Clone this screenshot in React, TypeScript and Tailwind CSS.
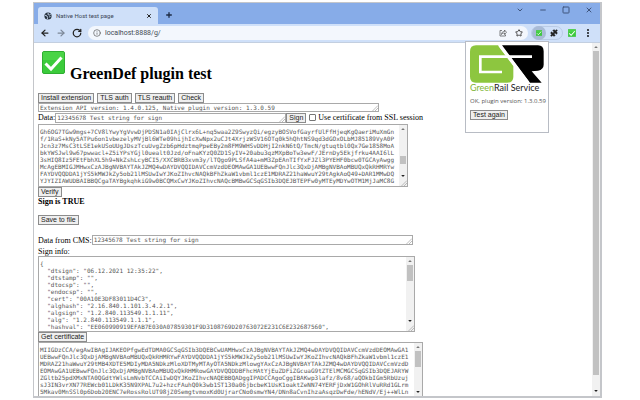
import type { ReactNode } from 'react';
import clsx from 'clsx';
import { ArrowLeft, ArrowRight, ChevronDown, Info, Minus, Plus, Puzzle, RotateCw, Square, Star, X } from 'lucide-react';

const SIGNATURE = [
  'Gh6OG7TGw9mgs+7CV8lYwyYgVvwDjPDSN1a0IAjClrx6L+nq5waa2Z9SwyzQi/egzyBOSVofGayrfUlFfHjeqKgQaeriMuXmGn',
  'f/1RaS+kNy5ATPu6on1vbezelyMVjBl6WTe09hijhIcXwNpx2uCJt4XrjzWSV16OTq0k5hQhtNS9qd3dGOxOLbMJ85189VyA0P',
  'Jcn3z7MsC3tLSE1ekUSoUUgJDszTcuUvgZzb6pHdztmqPpeEBy2m8FM9WHSvDDHjI2nkN6tQ/TmcN/gtuqtbl0Qx7Ge1858MoA',
  'bkYWSJwl9w67pwwacl+Z5iYPsYGjl0uealt0Jzd/oFnaKYzQ0ZD1SyIV+20abu3qzMXpBoTw3ewF/JErnDy5Ekjfrku4AAI6lL',
  '3sHIQ8Iz5FEtFbhXL5h9+NkZshLcyBCI5/XXCBRB3xvm3y/lTQgo9PLSfA4a+mM3ZpEAnTIfYxFJZl3PYEHF0bcw0TGCAyAwgg',
  'McAgEBMIGJMHwxCzAJBgNVBAYTAkJZMQ4wDAYDVQQIDAVCcmVzdDEOMAwGA1UEBwwFQnJlc3QxDjAMBgNVBAoMBUQxQkRHMRYw',
  'FAYDVQQDDA1jYS5kMWJkZy5ob21lMSUwIwYJKoZIhvcNAQkBFhZkaW1vbml1czE1MDRAZ21haWwuY29tAgkAoQ49+DAR1MMwDQ',
  'YJYIZIAWUDBAIBBQCgaTAYBgkqhkiG9w0BCQMxCwYJKoZIhvcNAQcBMBwGCSqGSIb3DQEJBTEPFw0yMTEyMDYwOTM1MjJaMC8G',
].join('\n');

const SIGN_INFO = `{
  "dtsign": "06.12.2021 12:35:22",
  "dtstamp": "",
  "dtocsp": "",
  "endocsp": "",
  "cert": "00A10E3DF83011D4C3",
  "alghash": "2.16.840.1.101.3.4.2.1",
  "algsign": "1.2.840.113549.1.1.11",
  "alg": "1.2.840.113549.1.1.1",
  "hashval": "EE060990919EFAB7E030A07859301F9D3108769D20763072E231C6E232687560",`;

const CERTIFICATE = [
  'MIIGDzCCA/egAwIBAgIJAKEOPfgwEdTDMA0GCSqGSIb3DQEBCwUAMHwxCzAJBgNVBAYTAkJZMQ4wDAYDVQQIDAVCcmVzdDEOMAwGA1',
  'UEBwwFQnJlc3QxDjAMBgNVBAoMBUQxQkRHMRYwFAYDVQQDDA1jYS5kMWJkZy5ob21lMSUwIwYJKoZIhvcNAQkBFhZkaW1vbml1czE1',
  'MDRAZ21haWwuY29tMB4XDTE5MDIyMDA5NDkzMloXDTMyMTAyOTA5NDkzMlowgYAxCzAJBgNVBAYTAkJZMQ4wDAYDVQQIDAVCcmVzdD',
  'EOMAwGA1UEBwwFQnJlc3QxDjAMBgNVBAoMBUQxQkRHMRowGAYDVQQDDBFhcHAtYjEuZDFiZGcuaG9tZTElMCMGCSqGSIb3DQEJARYW',
  'ZGltb25pdXMxNTA0QGdtYWlsLmNvbTCCAiIwDQYJKoZIhvcNAQEBBQADggIPADCCAgoCggIBAKwp3lafz/8v68/aQOkbIGm5RbUzuj',
  'sJ3IN3vrXN77REWcb01LDkK35N9XPAL7u2+hzcFAuhQ0k3wb1ST130a06jbcbeK1UsK1oaktZeNN74YERFjDxW1GOhRlVuRRd1GLrm',
  '5Mkav0MnSSl0p6Dob20ENC7eRossRolUT98jZ0SemgtvmoxKd0UjrarCNo0smwYN4/DNn8aCvnIhzaAsqzDwFde/hENdV/Ej++WlLn',
].join('\n');

function CheckMark({ className }: { className: string }) {
  return (
    <svg viewBox="0 0 23 23" className={className} aria-hidden="true">
      <rect x="0.5" y="0.5" width="22" height="22" rx="1.5" fill="#3bcb3b" stroke="#2fae31" />
      <path d="M1 1h21v8H1z" fill="#5ade52" opacity="0.5" />
      <path d="M3.5 12.5 9 18 19.5 6.5" fill="none" stroke="#fff" strokeWidth="3" />
    </svg>
  );
}

function Btn({ children }: { children: ReactNode }) {
  return (
    <button
      type="button"
      className="h-[10px] shrink-0 border border-[#8c8c8c] bg-[#efefef] px-[2px] font-['Liberation_Sans',sans-serif] text-[7px] leading-[8px] text-[#222]"
    >
      {children}
    </button>
  );
}

function Grip() {
  return (
    <svg viewBox="0 0 6 6" className="h-[6px] w-[6px] shrink-0 self-end" aria-hidden="true">
      <path d="M0.5 6 6 0.5M3 6l3-3" stroke="#a0a0a0" strokeWidth="0.7" />
    </svg>
  );
}

function Arrow({ up }: { up?: boolean }) {
  return (
    <svg viewBox="0 0 8 8" className="h-[8px] w-full shrink-0" aria-hidden="true">
      <path d={up ? 'M2.2 5h3.6L4 3z' : 'M2.2 3h3.6L4 5z'} fill={up ? '#777' : '#222'} />
    </svg>
  );
}

interface BoxProps {
  id: string;
  label: string;
  value: string;
  rows?: number;
  className: string;
  thumb?: string;
  grip?: boolean;
}

function Box({ id, label, value, rows = 1, className, thumb, grip = true }: BoxProps) {
  return (
    <div className={clsx('flex max-w-full overflow-hidden border border-[#a9a9a9] bg-white', className)}>
      <textarea
        id={id}
        aria-label={label}
        rows={rows}
        readOnly
        defaultValue={value}
        className={clsx(
          "block h-full min-w-0 flex-1 resize-none overflow-hidden px-px font-['DejaVu_Sans_Mono',monospace] text-[6px] leading-[7px] whitespace-pre text-[#555] outline-none",
          rows > 1 && 'pt-[3px]',
        )}
      />
      {thumb ? (
        <div className="flex w-[8px] shrink-0 flex-col bg-[#f1f1f1]">
          <Arrow up />
          <div className="flex flex-1 flex-col px-px">
            <div className={clsx('bg-[#c1c1c1]', thumb)} />
          </div>
          <Arrow />
          {grip && <Grip />}
        </div>
      ) : (
        <Grip />
      )}
    </div>
  );
}

function TitleBar() {
  return (
    <div className="flex h-[21px] shrink-0 items-end bg-[#87ace8] pl-[4px]">
      <div className="flex h-[17px] w-[120px] items-center rounded-t-[3px] bg-[#cfe0f9] px-[6px]">
        <svg viewBox="0 0 8 8" className="h-[8px] w-[8px]" aria-hidden="true">
          <circle cx="4" cy="4" r="3.6" fill="#26323f" />
          <path d="M1 3.2 3 4l.6 1.5L3.3 7M4.4 1l-.6 1.3 1.3.8 1.6-.6M5 5l1.6-.4" fill="none" stroke="#cfe0f9" strokeWidth="0.9" />
        </svg>
        <span className="ml-[4px] flex-1 font-['Roboto',sans-serif] text-[6px] leading-[8px] whitespace-nowrap text-[#3b4656]">
          Native Host test page
        </span>
        <button type="button" aria-label="Close tab">
          <X className="h-[6px] w-[6px] text-[#222]" strokeWidth={4} />
        </button>
      </div>
      <button type="button" aria-label="New tab" className="mb-[5px] ml-[7px]">
        <Plus className="h-[8px] w-[8px] text-[#1d2b45]" strokeWidth={4} />
      </button>
      <div className="ml-auto flex gap-[15px] self-start pt-[3px] pr-[7px] text-[#3f557d]">
        <button type="button" aria-label="Search tabs">
          <ChevronDown className="h-[8px] w-[8px]" strokeWidth={3} />
        </button>
        <button type="button" aria-label="Minimize">
          <Minus className="h-[8px] w-[8px]" strokeWidth={3} />
        </button>
        <button type="button" aria-label="Maximize">
          <Square className="h-[8px] w-[8px]" strokeWidth={3} />
        </button>
        <button type="button" aria-label="Close">
          <X className="h-[8px] w-[8px]" strokeWidth={3} />
        </button>
      </div>
    </div>
  );
}

function Toolbar() {
  return (
    <div className="flex h-[19px] shrink-0 items-center border-b border-[#c3cfe0] bg-[#cfe0f9] pr-[8px] pl-[6px]">
      <div className="flex gap-[6px]">
        <button type="button" aria-label="Back">
          <ArrowLeft className="h-[10px] w-[10px] text-[#222]" strokeWidth={3} />
        </button>
        <button type="button" aria-label="Forward">
          <ArrowRight className="h-[10px] w-[10px] text-[#7c8797]" strokeWidth={3} />
        </button>
        <button type="button" aria-label="Reload">
          <RotateCw className="h-[10px] w-[10px] text-[#222]" strokeWidth={3} />
        </button>
      </div>
      <div className="ml-[6px] flex h-[14px] flex-1 items-center rounded-full bg-[#f3f7fd] px-[5px]">
        <Info className="h-[8px] w-[8px] text-[#555]" strokeWidth={2} />
        <input
          aria-label="Address"
          readOnly
          defaultValue="localhost:8888/g/"
          className="ml-[4px] h-[10px] min-w-0 flex-1 font-['Roboto',sans-serif] text-[7px] leading-[10px] text-[#444b55] outline-none"
        />
        <button type="button" aria-label="Share">
          <svg viewBox="0 0 16 16" className="h-[8px] w-[8px]" fill="none" stroke="#555" strokeWidth="1.5" aria-hidden="true">
            <path d="M6 3H2v11h11v-3" />
            <path d="M5 11c0-4 2-6 6-6V2l4 4.5L11 11V8c-3 0-5 1-6 3z" />
          </svg>
        </button>
        <button type="button" aria-label="Bookmark" className="ml-[8px]">
          <Star className="h-[8px] w-[8px] text-[#444]" strokeWidth={3} />
        </button>
      </div>
      <div className="ml-[3px] flex h-[14px] items-center rounded-full border border-[#b9cbe6]">
        <button type="button" aria-label="GreenDef extension" className="flex h-[14px] w-[14px] items-center justify-center rounded-full bg-[#a9bbd6]">
          <CheckMark className="h-[6px] w-[6px]" />
        </button>
        <button type="button" aria-label="Extensions" className="px-[4px]">
          <Puzzle className="h-[8px] w-[8px] fill-[#222] text-[#222]" strokeWidth={1} />
        </button>
      </div>
      <CheckMark className="ml-[5px] h-[8px] w-[8px]" />
      <button type="button" aria-label="Menu" className="ml-[8px]">
        <svg viewBox="0 0 8 8" className="h-[8px] w-[8px]" aria-hidden="true">
          <circle cx="4" cy="1" r="0.9" />
          <circle cx="4" cy="4" r="0.9" />
          <circle cx="4" cy="7" r="0.9" />
        </svg>
      </button>
    </div>
  );
}

function Popup() {
  return (
    <div className="absolute top-[38px] right-[51px] h-[92px] w-[84px] border border-[#b8bcc4] bg-white px-[4px] pt-[3px]">
      <svg viewBox="0 0 222 112" className="h-[38px] w-[74px]" aria-hidden="true">
        <path d="M18 0H84L130 62V94Q130 112 112 112H18Q0 112 0 94V18Q0 0 18 0z" fill="#8dc63f" />
        <path d="M96 0H204Q221 0 221 18V58Q221 72 204 76L185 78 215 112H180z" fill="#000" />
        <path d="M186 34H31V80H96" fill="none" stroke="#fff" strokeWidth="8" />
        <path d="M89 0 174 112" stroke="#fff" strokeWidth="8" />
      </svg>
      <div className="font-['Lato',sans-serif] text-[9px] leading-[10px] whitespace-nowrap text-[#222]">
        <span className="text-[#7fb536]">Green</span>Rail Service
      </div>
      <p className="mt-[4px] font-['Open_Sans',sans-serif] text-[6px] leading-[8px] whitespace-nowrap text-[#555]">
        OK, plugin version: 1.3.0.59
      </p>
      <div className="mt-[5px] flex">
        <Btn>Test again</Btn>
      </div>
    </div>
  );
}

export default function App() {
  return (
    <div className="flex h-screen flex-col bg-white pt-[2px] pr-[38px] pb-[2px] pl-[33px] font-['Liberation_Serif',serif] text-[8px] leading-[9px] text-black">
      <div className="relative flex min-h-0 flex-1 flex-col border border-r-2 border-b-2 border-[#c4c6ca]">
        <TitleBar />
        <Toolbar />
        <div className="flex min-h-0 flex-1">
          <main className="flex min-w-0 flex-1 flex-col items-start overflow-hidden pt-[8px] pl-[4px]">
            <div className="flex h-[32px] gap-[5px] pl-[4px]">
              <CheckMark className="h-[23px] w-[23px]" />
              <h1 className="self-end text-[16px] leading-[18px] font-bold">GreenDef plugin test</h1>
            </div>
            <div className="mt-[10px] flex gap-[3px]">
              <Btn>Install extension</Btn>
              <Btn>TLS auth</Btn>
              <Btn>TLS reauth</Btn>
              <Btn>Check</Btn>
            </div>
            <Box
              id="version"
              label="Version"
              value="Extension API version: 1.4.0.125, Native plugin version: 1.3.0.59"
              className="h-[9px] w-[341px]"
            />
            <div className="mt-px flex items-center">
              <label htmlFor="data">Data:</label>
              <Box id="data" label="Data" value="12345678 Test string for sign" className="h-[10px] w-[231px]" />
              <Btn>Sign</Btn>
              <label className="ml-[3px] flex items-center gap-[2px]">
                <input type="checkbox" className="h-[7px] w-[7px] appearance-none rounded-[1px] border border-[#767676] bg-white" />
                Use certificate from SSL session
              </label>
            </div>
            <Box id="signature" label="Signature" value={SIGNATURE} rows={8} className="mt-px h-[63px] w-[370px]" thumb="mt-[23px] h-[8px]" />
            <Btn>Verify</Btn>
            <p className="font-bold">Sign is TRUE</p>
            <div className="mt-[9px] flex">
              <Btn>Save to file</Btn>
            </div>
            <div className="mt-[10px] flex items-end">
              <label htmlFor="cms">Data from CMS:</label>
              <Box id="cms" label="Data from CMS" value="12345678 Test string for sign" className="h-[10px] w-[321px]" />
            </div>
            <label htmlFor="info" className="mt-[2px]">
              Sign info:
            </label>
            <Box id="info" label="Sign info" value={SIGN_INFO} rows={10} className="h-[77px] w-[377px]" thumb="h-[16px]" />
            <Btn>Get certificate</Btn>
            <Box id="cert" label="Certificate" value={CERTIFICATE} rows={7} className="h-[54px] w-[385px] border-b-0" thumb="h-[16px]" grip={false} />
          </main>
          <div className="flex w-[8px] shrink-0 flex-col bg-[#f1f1f1] pb-px">
            <Arrow up />
            <div className="mx-px mb-[12px] flex-1 bg-[#c1c1c1]" />
            <Arrow />
          </div>
        </div>
        <Popup />
      </div>
    </div>
  );
}
